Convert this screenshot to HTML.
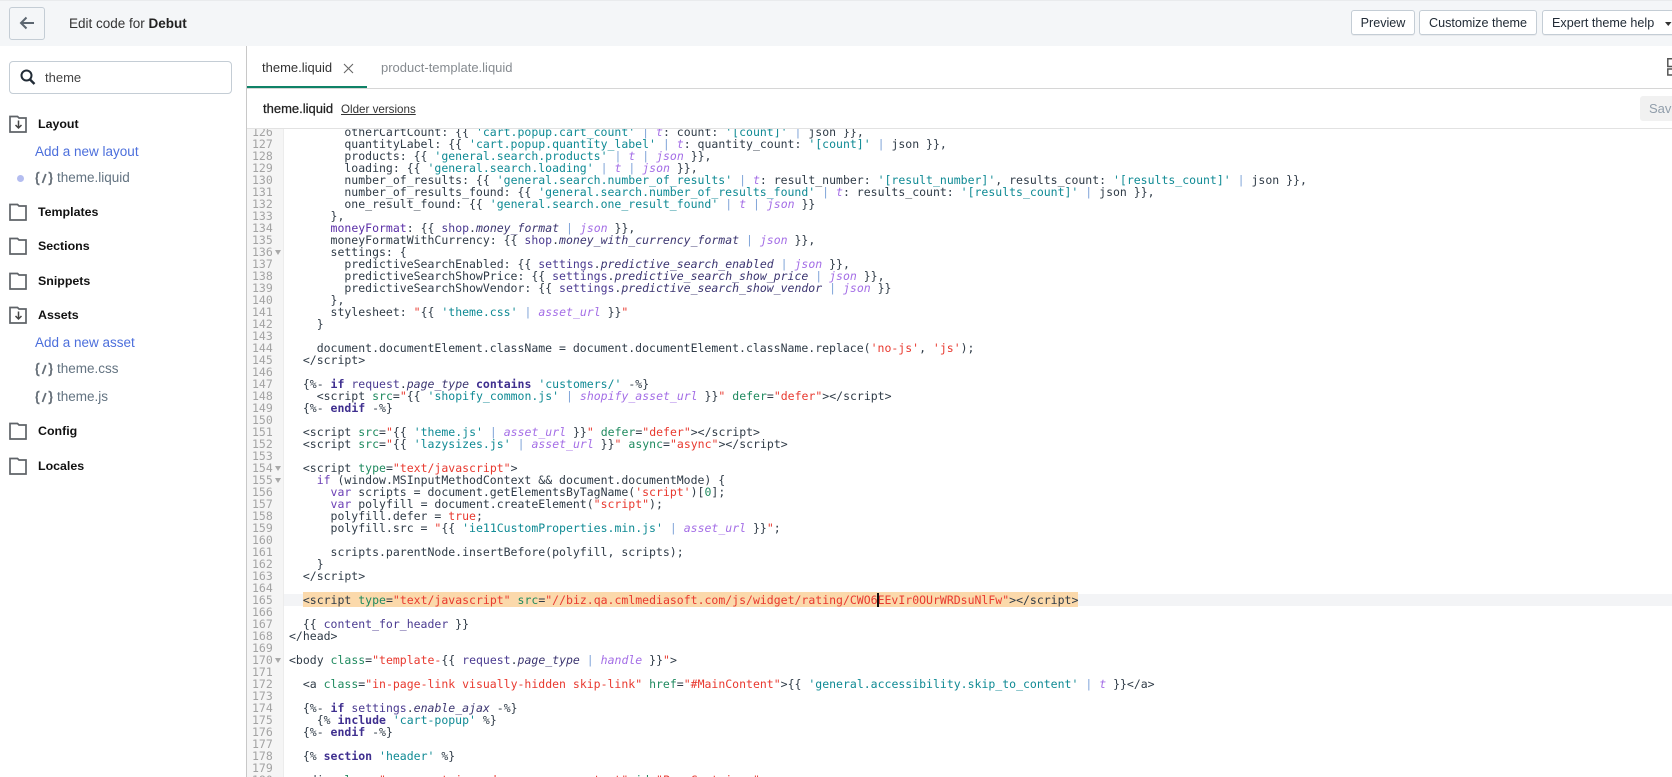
<!DOCTYPE html>
<html lang="en">
<head>
<meta charset="utf-8">
<title>Edit code for Debut</title>
<style>
html,body{margin:0;padding:0;width:1672px;height:777px;overflow:hidden;background:#fff}
body{font-family:"Liberation Sans",sans-serif;color:#212b36;position:relative}
.a{position:absolute;white-space:nowrap;line-height:20px}
svg{position:absolute;overflow:visible}
.btn{position:absolute;top:10px;height:23px;border:1px solid #c4cdd5;border-radius:3px;background:#fff;box-shadow:0 1px 0 rgba(22,29,37,.05);font-size:12.6px;line-height:25px;color:#212b36;box-sizing:content-box;text-align:center;white-space:nowrap}
.lbl{font-weight:bold;font-size:12.4px;left:38px;color:#111}
.lnk{font-size:13.5px;color:#4c6fdc;left:35px}
.fil{font-size:13.5px;color:#637381;left:57px}
pre{margin:0;font-family:"DejaVu Sans Mono","Liberation Mono",monospace;font-size:11.5px;line-height:12px}
#code{position:absolute;color:#2f3b47}
#nums{position:absolute;color:#a3a3a3}
i{font-style:italic}
.at{color:#1f8a5f}.s{color:#e8392f}.q{color:#0f8a94}.v{color:#4a3a90}.p{color:#3b3570}
.f{color:#a46ee6;font-style:italic}.b{color:#7fa3d8}.k{color:#6b3fb5}.d{color:#3f2f8f;font-weight:bold}
.m{color:#5a2ea6}
</style>
</head>
<body>
<div style="position:absolute;left:0;top:0;width:1672px;height:46px;background:#f4f6f8;border-top:1px solid #e9ebed;box-sizing:border-box"></div>
<div style="position:absolute;left:9px;top:7px;width:34px;height:31px;border:1px solid #c4cdd5;border-radius:3px;background:#f4f6f8"></div>
<svg style="left:0;top:0" width="60" height="46"><path d="M34 23H21M26.500 17.500L21 23l5.500 5.500" fill="none" stroke="#5c6670" stroke-width="2"/></svg>
<div class="a" style="left:69px;top:14px;font-size:13.5px;color:#333">Edit code for <span style="font-weight:bold;color:#222">Debut</span></div>

<div class="btn" style="left:1351px;width:62px">Preview</div>
<div class="btn" style="left:1419px;width:116px">Customize theme</div>
<div class="btn" style="left:1542px;width:140px;text-align:left;text-indent:9px">Expert theme help</div>
<svg style="left:1665px;top:21px" width="8" height="6"><path d="M0 1h6.500L3.250 5z" fill="#333"/></svg>

<!-- sidebar -->
<div style="position:absolute;left:246px;top:46px;width:1px;height:731px;background:#c8c8c8"></div>
<div style="position:absolute;left:9px;top:61px;width:221px;height:31px;border:1px solid #c4cdd5;border-radius:4px"></div>
<svg style="left:0;top:60px" width="50" height="36"><circle cx="26.500" cy="15.500" r="5" fill="none" stroke="#212b36" stroke-width="2"/><path d="M30 19.500l4.500 4.500" stroke="#212b36" stroke-width="2.400"/></svg>
<div class="a" style="left:45px;top:68px;font-size:13px;color:#444">theme</div>

<svg style="left:0;top:0" width="246" height="500" fill="none" stroke="#5f6368" stroke-width="1.700">
<path d="M10 116.500h7.500l1.500 1.500H26v14H10z"/><path d="M18.500 120.500v7M15.500 125l3 3 3-3" stroke-width="1.500" stroke="#444"/>
<path d="M10 204.500h7.500l1.500 1.500H26v14H10z"/>
<path d="M10 238.500h7.500l1.500 1.500H26v14H10z"/>
<path d="M10 273.500h7.500l1.500 1.500H26v14H10z"/>
<path d="M10 307.500h7.500l1.500 1.500H26v14H10z"/><path d="M18.500 311.500v7M15.500 316l3 3 3-3" stroke-width="1.500" stroke="#444"/>
<path d="M10 423.500h7.500l1.500 1.500H26v14H10z"/>
<path d="M10 458.500h7.500l1.500 1.500H26v14H10z"/>
<g stroke="#666f78" stroke-width="1.800">
<g transform="translate(0,172)"><path d="M39.500 .5c-2 0-2.500 1-2.500 2.500v1.500c0 1.500-.5 2-1.500 2 1 0 1.500.5 1.500 2V10c0 1.500.5 2.500 2.500 2.500M48.500 .5c2 0 2.500 1 2.500 2.500v1.500c0 1.500.5 2 1.500 2-1 0-1.500.5-1.500 2V10c0 1.500-.5 2.500-2.500 2.500M45.800 2l-3.300 9"/></g>
<g transform="translate(0,363)"><path d="M39.500 .5c-2 0-2.500 1-2.500 2.500v1.500c0 1.500-.5 2-1.500 2 1 0 1.500.5 1.500 2V10c0 1.500.5 2.500 2.500 2.500M48.500 .5c2 0 2.500 1 2.500 2.500v1.500c0 1.500.5 2 1.500 2-1 0-1.500.5-1.500 2V10c0 1.500-.5 2.500-2.500 2.500M45.800 2l-3.300 9"/></g>
<g transform="translate(0,391)"><path d="M39.500 .5c-2 0-2.500 1-2.500 2.500v1.500c0 1.500-.5 2-1.500 2 1 0 1.500.5 1.500 2V10c0 1.500.5 2.500 2.500 2.500M48.500 .5c2 0 2.500 1 2.500 2.500v1.500c0 1.500.5 2 1.500 2-1 0-1.500.5-1.500 2V10c0 1.500-.5 2.500-2.500 2.500M45.800 2l-3.300 9"/></g>
</g>
<circle cx="20.500" cy="178.500" r="3.500" fill="#b4bdf0" stroke="none"/>
</svg>
<div class="a lbl" style="top:114px">Layout</div>
<div class="a lnk" style="top:142px">Add a new layout</div>
<div class="a fil" style="top:168px">theme.liquid</div>
<div class="a lbl" style="top:202px">Templates</div>
<div class="a lbl" style="top:236px">Sections</div>
<div class="a lbl" style="top:271px">Snippets</div>
<div class="a lbl" style="top:305px">Assets</div>
<div class="a lnk" style="top:333px">Add a new asset</div>
<div class="a fil" style="top:359px">theme.css</div>
<div class="a fil" style="top:387px">theme.js</div>
<div class="a lbl" style="top:421px">Config</div>
<div class="a lbl" style="top:456px">Locales</div>

<!-- tabs -->
<div class="a" style="left:262px;top:58px;font-size:13px;color:#333">theme.liquid</div>
<svg style="left:343px;top:63px" width="11" height="11"><path d="M1 1l9 9M10 1l-9 9" stroke="#666" stroke-width="1.100"/></svg>
<div class="a" style="left:381px;top:58px;font-size:13px;color:#868b90">product-template.liquid</div>
<div style="position:absolute;left:247px;top:88px;width:1425px;height:1px;background:#d6d6d6"></div>
<div style="position:absolute;left:247px;top:86px;width:120px;height:2px;background:#0f8267"></div>
<svg style="left:1667px;top:58px" width="6" height="18" fill="none" stroke="#555" stroke-width="1.500"><path d="M8 .8H.8v7.700H8M8 11H.8v6H8"/></svg>

<div class="a" style="left:263px;top:99px;font-size:13px;color:#222;-webkit-text-stroke:.25px #222">theme.liquid</div>
<div class="a" style="left:341px;top:100px;font-size:11.6px;color:#333;text-decoration:underline">Older versions</div>
<div style="position:absolute;left:1640px;top:96px;width:40px;height:25px;background:#f1f1f1;border-radius:3px;font-size:13px;line-height:25px;color:#919eab;text-indent:9px">Save</div>
<div style="position:absolute;left:247px;top:128px;width:1425px;height:1px;background:#e2e2e2"></div>

<!-- editor -->
<div style="position:absolute;left:247px;top:129px;width:1425px;height:648px;overflow:hidden">
<div style="position:absolute;left:0;top:0;width:37px;height:648px;background:#f5f5f5;border-right:1px solid #ececec;box-sizing:border-box"></div>
<div style="position:absolute;left:37px;top:465px;width:1388px;height:12px;background:#f3f4f6"></div>
<div style="position:absolute;left:56px;top:463px;width:775px;height:15px;background:#fbd9ab"></div>
<pre id="nums" style="left:5px;top:-3px">126
127
128
129
130
131
132
133
134
135
136
137
138
139
140
141
142
143
144
145
146
147
148
149
150
151
152
153
154
155
156
157
158
159
160
161
162
163
164
165
166
167
168
169
170
171
172
173
174
175
176
177
178
179
180</pre>
<pre id="code" style="left:42px;top:-3px">        otherCartCount: {{ <span class="q">'cart.popup.cart_count'</span> <span class="b">|</span> <span class="f">t</span>: count: <span class="q">'[count]'</span> <span class="b">|</span> json }},
        quantityLabel: {{ <span class="q">'cart.popup.quantity_label'</span> <span class="b">|</span> <span class="f">t</span>: quantity_count: <span class="q">'[count]'</span> <span class="b">|</span> json }},
        products: {{ <span class="q">'general.search.products'</span> <span class="b">|</span> <span class="f">t</span> <span class="b">|</span> <span class="f">json</span> }},
        loading: {{ <span class="q">'general.search.loading'</span> <span class="b">|</span> <span class="f">t</span> <span class="b">|</span> <span class="f">json</span> }},
        number_of_results: {{ <span class="q">'general.search.number_of_results'</span> <span class="b">|</span> <span class="f">t</span>: result_number: <span class="q">'[result_number]'</span>, results_count: <span class="q">'[results_count]'</span> <span class="b">|</span> json }},
        number_of_results_found: {{ <span class="q">'general.search.number_of_results_found'</span> <span class="b">|</span> <span class="f">t</span>: results_count: <span class="q">'[results_count]'</span> <span class="b">|</span> json }},
        one_result_found: {{ <span class="q">'general.search.one_result_found'</span> <span class="b">|</span> <span class="f">t</span> <span class="b">|</span> <span class="f">json</span> }}
      },
      <span class="m">moneyFormat</span>: {{ <span class="v">shop</span>.<i class="p">money_format</i> <span class="b">|</span> <span class="f">json</span> }},
      moneyFormatWithCurrency: {{ <span class="v">shop</span>.<i class="p">money_with_currency_format</i> <span class="b">|</span> <span class="f">json</span> }},
      settings: {
        predictiveSearchEnabled: {{ <span class="v">settings</span>.<i class="p">predictive_search_enabled</i> <span class="b">|</span> <span class="f">json</span> }},
        predictiveSearchShowPrice: {{ <span class="v">settings</span>.<i class="p">predictive_search_show_price</i> <span class="b">|</span> <span class="f">json</span> }},
        predictiveSearchShowVendor: {{ <span class="v">settings</span>.<i class="p">predictive_search_show_vendor</i> <span class="b">|</span> <span class="f">json</span> }}
      },
      stylesheet: <span class="s">"</span>{{ <span class="q">'theme.css'</span> <span class="b">|</span> <span class="f">asset_url</span> }}<span class="s">"</span>
    }

    document.documentElement.className = document.documentElement.className.replace(<span class="s">'no-js'</span>, <span class="s">'js'</span>);
  &lt;/script&gt;

  {%- <span class="d">if</span> <span class="v">request</span>.<i class="p">page_type</i> <span class="d">contains</span> <span class="q">'customers/'</span> -%}
    &lt;script <span class="at">src</span>=<span class="s">"</span>{{ <span class="q">'shopify_common.js'</span> <span class="b">|</span> <span class="f">shopify_asset_url</span> }}<span class="s">"</span> <span class="at">defer</span>=<span class="s">"defer"</span>&gt;&lt;/script&gt;
  {%- <span class="d">endif</span> -%}

  &lt;script <span class="at">src</span>=<span class="s">"</span>{{ <span class="q">'theme.js'</span> <span class="b">|</span> <span class="f">asset_url</span> }}<span class="s">"</span> <span class="at">defer</span>=<span class="s">"defer"</span>&gt;&lt;/script&gt;
  &lt;script <span class="at">src</span>=<span class="s">"</span>{{ <span class="q">'lazysizes.js'</span> <span class="b">|</span> <span class="f">asset_url</span> }}<span class="s">"</span> <span class="at">async</span>=<span class="s">"async"</span>&gt;&lt;/script&gt;

  &lt;script <span class="at">type</span>=<span class="s">"text/javascript"</span>&gt;
    <span class="k">if</span> (window.MSInputMethodContext &amp;&amp; document.documentMode) {
      <span class="k">var</span> scripts = document.getElementsByTagName(<span class="s">'script'</span>)[<span class="at">0</span>];
      <span class="k">var</span> polyfill = document.createElement(<span class="s">"script"</span>);
      polyfill.defer = <span class="s">true</span>;
      polyfill.src = <span class="s">"</span>{{ <span class="q">'ie11CustomProperties.min.js'</span> <span class="b">|</span> <span class="f">asset_url</span> }}<span class="s">"</span>;

      scripts.parentNode.insertBefore(polyfill, scripts);
    }
  &lt;/script&gt;

  &lt;script <span class="at">type</span>=<span class="s">"text/javascript"</span> <span class="at">src</span>=<span class="s">"//biz.qa.cmlmediasoft.com/js/widget/rating/CWO6EEvIr0OUrWRDsuNlFw"</span>&gt;&lt;/script&gt;

  {{ <span class="v">content_for_header</span> }}
&lt;/head&gt;

&lt;body <span class="at">class</span>=<span class="s">"template-</span>{{ <span class="v">request</span>.<i class="p">page_type</i> <span class="b">|</span> <span class="f">handle</span> }}<span class="s">"</span>&gt;

  &lt;a <span class="at">class</span>=<span class="s">"in-page-link visually-hidden skip-link"</span> <span class="at">href</span>=<span class="s">"#MainContent"</span>&gt;{{ <span class="q">'general.accessibility.skip_to_content'</span> <span class="b">|</span> <span class="f">t</span> }}&lt;/a&gt;

  {%- <span class="d">if</span> <span class="v">settings</span>.<i class="p">enable_ajax</i> -%}
    {% <span class="d">include</span> <span class="q">'cart-popup'</span> %}
  {%- <span class="d">endif</span> -%}

  {% <span class="d">section</span> <span class="q">'header'</span> %}

  &lt;div <span class="at">class</span>=<span class="s">"page-container drawer-page-content"</span> <span class="at">id</span>=<span class="s">"PageContainer"</span>&gt;</pre>
<div style="position:absolute;left:630px;top:464px;width:1.500px;height:14px;background:#111"></div>
<svg style="left:0;top:0" width="37" height="648" fill="#a9a9a9"><path d="M28 121h6l-3 5zM28 337h6l-3 5zM28 349h6l-3 5zM28 529h6l-3 5z"/></svg>
</div>
</body>
</html>
